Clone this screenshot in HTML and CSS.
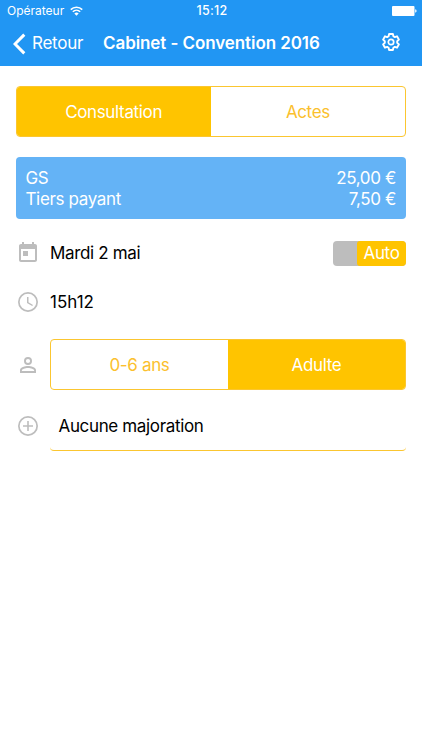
FILE: index.html
```html
<!DOCTYPE html>
<html lang="fr">
<head>
<meta charset="utf-8">
<title>Cabinet - Convention 2016</title>
<link rel="stylesheet" href="styles.css">
</head>
<body>
<header class="header">
  <div class="status">
    <div class="carrier"><span>Opérateur</span>
      <svg class="wifi" viewBox="0 0 12 9"><path d="M.7 3.2a7.6 7.6 0 0 1 10.6 0M2.6 5.2a4.9 4.9 0 0 1 6.8 0" fill="none" stroke="#fff" stroke-width="1.5"/><path d="M6 8.8 4 6.8a2.8 2.8 0 0 1 4 0z" fill="#fff"/></svg>
    </div>
    <span class="clock">15:12</span>
    <svg class="battery" viewBox="0 0 25 10"><rect width="22.5" height="10" rx="1" fill="#fff"/><path d="M23.2 3.3q1.4.3 1.4 1.7t-1.4 1.7z" fill="#fff"/></svg>
  </div>
  <nav class="nav">
    <a class="back"><svg class="chevron" viewBox="0 0 13 22"><path d="M11.3 1.6 2 11l9.3 9.4" fill="none" stroke="#fff" stroke-width="3"/></svg><span class="back-label">Retour</span></a>
    <h1 class="title">Cabinet - Convention 2016</h1>
    <svg class="gear" viewBox="0 0 18 18"><path d="M7.1 1h3.8l.5 2.3 1.4.8 2.2-.8 1.9 3.3-1.7 1.6v1.6l1.7 1.6-1.9 3.3-2.2-.8-1.4.8-.5 2.3H7.1l-.5-2.3-1.4-.8-2.2.8-1.900-3.300 1.700-1.600V8.200L1.100 6.600 3 3.300l2.200.800 1.400-.800z" fill="none" stroke="#fff" stroke-width="1.900" stroke-linejoin="round"/><circle cx="9" cy="9" r="2.700" fill="none" stroke="#fff" stroke-width="1.700"/></svg>
  </nav>
</header>
<main class="content">
  <div class="segmented">
    <div class="segment active"><span>Consultation</span></div>
    <div class="segment"><span>Actes</span></div>
  </div>
  <section class="summary">
    <div class="line"><span>GS</span><span>25,00 €</span></div>
    <div class="line"><span>Tiers payant</span><span>7,50 €</span></div>
  </section>
  <div class="row date">
    <svg class="icon" viewBox="0 0 24 24"><path d="M19 3h-1V1h-2v2H8V1H6v2H5c-1.110 0-2 .9-2 2v14c0 1.100.89 2 2 2h14c1.100 0 2-.9 2-2V5c0-1.100-.9-2-2-2zm0 16H5V8h14v11zM7 10h5v5H7z"/></svg>
    <span>Mardi 2 mai</span>
    <div class="switch"><span class="switch-on">Auto</span></div>
  </div>
  <div class="row time">
    <svg class="icon" viewBox="0 0 24 24"><path d="M12 2a10 10 0 1 0 0 20 10 10 0 0 0 0-20zm0 18.300a8.300 8.300 0 1 1 0-16.600 8.300 8.300 0 0 1 0 16.600zM12.500 7H11v6l5.200 3.100.8-1.200-4.500-2.700z"/></svg>
    <span class="hour">15h12</span>
  </div>
  <div class="row patient">
    <svg class="icon" viewBox="0 0 24 24"><path d="M12 5.900a2.100 2.100 0 1 1 0 4.200 2.100 2.100 0 0 1 0-4.200m0 9c2.970 0 6.100 1.460 6.100 2.100v1.100H5.900V17c0-.64 3.130-2.100 6.100-2.100M12 4a4 4 0 1 0 0 8 4 4 0 0 0 0-8zm0 9c-2.670 0-8 1.340-8 4v3h16v-3c0-2.660-5.330-4-8-4z"/></svg>
    <div class="segmented">
      <div class="segment"><span>0-6 ans</span></div>
      <div class="segment active"><span>Adulte</span></div>
    </div>
  </div>
  <div class="row extra">
    <svg class="icon" viewBox="0 0 24 24"><path d="M12 2a10 10 0 1 0 0 20 10 10 0 0 0 0-20zm0 18.300a8.300 8.300 0 1 1 0-16.600 8.300 8.300 0 0 1 0 16.600zM12.800 7h-1.600v4.200H7v1.600h4.200V17h1.600v-4.200H17v-1.600h-4.200z"/></svg>
    <div class="select"><span>Aucune majoration</span></div>
  </div>
</main>
</body>
</html>
```
FILE: styles.css
```css
* { box-sizing: border-box; }
body {
  margin: 0;
  background: #fff;
  color: #000;
  font: 400 17px/21px Inter, "Liberation Sans", sans-serif;
  letter-spacing: -0.35px;
}
svg { display: block; flex: none; }
.header { height: 65.5px; background: #2196f3; color: #fff; }
.status {
  display: grid;
  grid-template-columns: 1fr auto 1fr;
  align-items: center;
  height: 22px;
  padding: 0 5px 0 7px;
  font-size: 12px;
  line-height: 22px;
  letter-spacing: 0;
}
.carrier { display: flex; align-items: center; gap: 6px; }
.wifi { width: 13px; height: 10px; }
.clock { font-weight: 500; font-size: 12.5px; letter-spacing: 0.3px; }
.battery { width: 25px; height: 10px; justify-self: end; }
.nav { display: flex; align-items: center; height: 43px; padding: 0 22px 0 13px; }
.back { display: flex; align-items: center; gap: 6px; width: 90px; }
.back-label { letter-spacing: -0.25px; }
.chevron { width: 13px; height: 22px; }
.title { flex: 1; margin: 0; font-size: 17px; font-weight: 600; line-height: 21px; letter-spacing: -0.08px; white-space: nowrap; }
.gear { width: 18px; height: 18px; margin-top: -3px; }
.content { padding: 20.5px 16px 0 15.5px; }
.segmented {
  display: flex;
  flex: 1;
  height: 51px;
  border: 1px solid #fbc630;
  border-radius: 4px;
  overflow: hidden;
  color: #fbc02d;
}
.segment { flex: 1; display: flex; align-items: center; justify-content: center; padding-top: 2px; }
.segment.active { background: #ffc400; color: #fff; }
.summary {
  height: 62px;
  margin-top: 20px;
  padding: 11px 10px 9px;
  border-radius: 4px;
  background: #64b3f6;
  color: #fff;
}
.line { display: flex; justify-content: space-between; }
.row { display: flex; align-items: center; }
.icon { width: 24px; height: 24px; margin-right: 10.5px; fill: #bdbdbd; }
.date { height: 48px; margin-top: 10px; }
.time { height: 50px; }
.hour { letter-spacing: 0; }
.patient { height: 51px; margin-top: 12px; }
.extra { height: 61px; }
.extra .icon { margin-top: 11px; }
.switch {
  display: flex;
  justify-content: flex-end;
  width: 73.5px;
  height: 25px;
  margin-left: auto;
  border-radius: 4px;
  overflow: hidden;
  background: #bdbdbd;
}
.switch-on {
  width: 49px;
  border-radius: 3px 0 0 3px;
  background: #ffc400;
  color: #fff;
  line-height: 25px;
  text-align: center;
}
.select {
  flex: 1;
  display: flex;
  align-items: center;
  height: 51px;
  margin-top: 10px;
  padding: 2px 0 0 8.5px;
  border-bottom: 1px solid #fbc630;
  border-radius: 4px;
}
```
